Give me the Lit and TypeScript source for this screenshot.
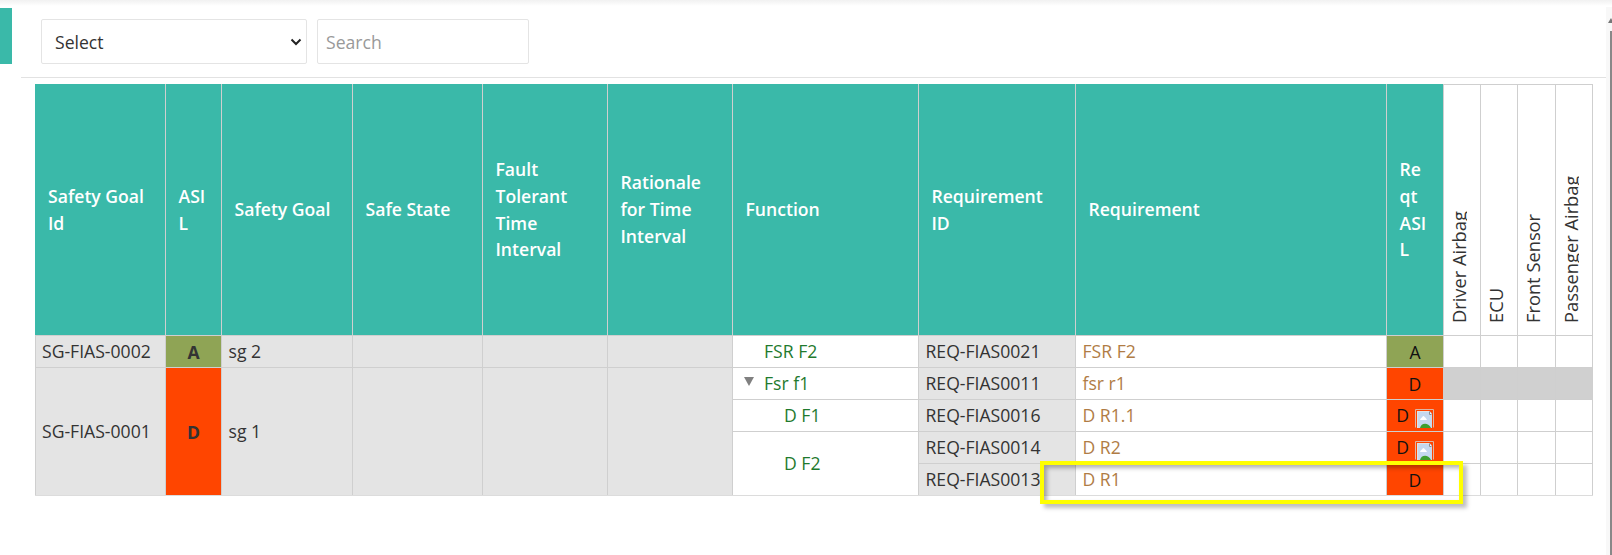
import { LitElement, html, css } from "lit";
import { customElement } from "lit/decorators.js";

const FONT = css`"Open Sans", sans-serif`;

const brokenIcon = html`<svg class="broken" width="19" height="19" viewBox="0 0 19 19" aria-hidden="true">
  <path d="M.5 18.5V.5h18v18" fill="none" stroke="#dcb6a6"/>
  <path d="M2 2h12.5L17 4.5V19H2z" fill="#c5d8ee"/>
  <path d="M2.5 19V2.5h11.5" fill="none" stroke="#e3e3e3"/>
  <path d="M14.5 2.5v3h2" fill="#fff" stroke="#8c8c8c"/>
  <path d="M5 11c.5-2 2-2 3-4 1 0 3 2 4 4z" fill="#fff"/>
  <path d="M5 19c1-5 8-6 11 0z" fill="#3f9f2d"/>
</svg>`;

@customElement("app-root")
export class AppRoot extends LitElement {
  static styles = css`
    :host { display: block; height: 555px; width: 1612px; overflow: hidden; position: relative; background: #fff; font-family: ${FONT}; color: #333; box-sizing: border-box; }
    * { box-sizing: border-box; }
    .page { display: flex; align-items: flex-start; height: 100%; }
    .tab { width: 12px; height: 56px; margin-top: 8px; background: #3ab9a9; flex: none; }
    .main { flex: none; width: 1585px; margin-left: 9px; padding-top: 19px; }
    .toolbar { display: flex; gap: 10px; padding: 0 0 13px 20px; border-bottom: 1px solid #e2e2e2; }
    .sel { width: 266px; height: 45px; border: 1px solid #e4e4e4; border-radius: 2px; display: flex; align-items: center; justify-content: space-between; padding: 0 4px 0 13px; font-size: 17.6px; color: #333; }
    .search { width: 212px; height: 45px; border: 1px solid #e4e4e4; border-radius: 2px; display: flex; align-items: center; padding-left: 8px; font-size: 17.6px; color: #999; }
    table { border-collapse: collapse; table-layout: fixed; margin: 6px 0 0 14px; width: 1557px; font-size: 17.6px; }
    th, td { border: 1px solid #cfcfcf; padding: 0 6.5px; overflow: visible; }
    thead th { height: 251px; background: #3ab9a9; color: #fff; font-weight: 600; text-align: left; padding: 0 12.5px 1px; line-height: 26.7px; vertical-align: middle; word-break: break-all; border-top-color: #3ab9a9; }
    thead th.first { border-left-color: #3ab9a9; padding-left: 12px; }
    thead th.nb { word-break: normal; }
    thead th.rot { background: #fff; color: #333; font-size: 18.3px; font-weight: 400; padding: 0 0 12px 0; vertical-align: bottom; border-top-color: #cfcfcf; }
    .rot span { display: block; writing-mode: vertical-rl; transform: rotate(180deg); line-height: 16px; width: 16px; overflow: hidden; white-space: nowrap; margin-left: 7px; }
    tbody td { height: 32px; line-height: 22px; padding-bottom: 2px; white-space: nowrap; }
    tbody td.c0 { padding-left: 6px; }
    tbody tr:last-child td, tbody td.end { border-bottom-color: #dcdcdc; }
    .g { background: #e4e4e4; }
    .a { background: #8fa455; text-align: center; padding: 0; }
    .d { background: #ff4500; text-align: center; padding: 0; }
    .b { font-weight: 700; }
    .k { color: #111; }
    .fn { color: #1f7a2e; background: #fff; }
    tbody td.i1 { padding-left: 31px; }
    tbody td.i2 { padding-left: 51px; }
    .rq { color: #b07c45; }
    .off { background: #d0d0d0; }
    .tw { position: relative; }
    .arrow { position: absolute; left: 11px; top: 9px; width: 0; height: 0; border-left: 5.5px solid transparent; border-right: 5.5px solid transparent; border-top: 9px solid #808080; }
    .broken { vertical-align: -6px; margin-left: 1px; }
    .hl { position: absolute; left: 1040px; top: 461px; width: 423px; height: 43px; border: 4px solid #ffff00; box-shadow: 4px 4px 4px rgba(0,0,0,.25), inset 3px 3px 4px rgba(0,0,0,.3); pointer-events: none; }
    .track { position: absolute; right: 0; top: 7px; bottom: 0; width: 6px; background: #f8f8f8; }
    .thumb { position: absolute; right: 0; top: 31px; bottom: 0; width: 2px; background: #888; }
    .uparrow { position: absolute; right: -2px; top: 18px; width: 0; height: 0; border-left: 3px solid transparent; border-right: 3px solid transparent; border-bottom: 5px solid #777; }
    .topline { position: absolute; left: 0; right: 0; top: 0; height: 6px; background: linear-gradient(#f1f1f1, #fff); }
  `;

  render() {
    return html`
      <div class="topline"></div>
      <div class="track"></div>
      <div class="thumb"></div>
      <div class="uparrow"></div>
      <div class="page">
        <div class="tab"></div>
        <div class="main">
          <div class="toolbar">
            <div class="sel"><span>Select</span>
              <svg width="12" height="8" viewBox="0 0 12 8"><path d="M1.5 1.5 6 6l4.5-4.5" fill="none" stroke="#222" stroke-width="2"/></svg>
            </div>
            <div class="search">Search</div>
          </div>
          <table>
            <colgroup>
              ${[130, 56, 131, 130, 125, 125, 186, 157, 311, 57, 37, 37, 38, 37].map((w) => html`<col style="width:${w}px" />`)}
            </colgroup>
            <thead>
              <tr>
                <th class="nb first">Safety Goal Id</th>
                <th>ASIL</th>
                <th class="nb">Safety Goal</th>
                <th class="nb">Safe State</th>
                <th class="nb">Fault Tolerant Time Interval</th>
                <th class="nb">Rationale for Time Interval</th>
                <th class="nb">Function</th>
                <th class="nb">Requirement ID</th>
                <th class="nb">Requirement</th>
                <th>Reqt ASIL</th>
                <th class="rot"><span>Driver Airbag</span></th>
                <th class="rot"><span>ECU</span></th>
                <th class="rot"><span>Front Sensor</span></th>
                <th class="rot"><span>Passenger Airbag</span></th>
              </tr>
            </thead>
            <tbody>
              <tr>
                <td class="g c0">SG-FIAS-0002</td>
                <td class="a b">A</td>
                <td class="g">sg 2</td>
                <td class="g"></td><td class="g"></td><td class="g"></td>
                <td class="fn i1">FSR F2</td>
                <td class="g">REQ-FIAS0021</td>
                <td class="rq">FSR F2</td>
                <td class="a k">A</td>
                <td></td><td></td><td></td><td></td>
              </tr>
              <tr>
                <td class="g end c0" rowspan="4">SG-FIAS-0001</td>
                <td class="d b end" rowspan="4">D</td>
                <td class="g end" rowspan="4">sg 1</td>
                <td class="g end" rowspan="4"></td><td class="g end" rowspan="4"></td><td class="g end" rowspan="4"></td>
                <td class="fn i1 tw"><span class="arrow"></span>Fsr f1</td>
                <td class="g">REQ-FIAS0011</td>
                <td class="rq">fsr r1</td>
                <td class="d k">D</td>
                <td class="off"></td><td class="off"></td><td class="off"></td><td class="off"></td>
              </tr>
              <tr>
                <td class="fn i2">D F1</td>
                <td class="g">REQ-FIAS0016</td>
                <td class="rq">D R1.1</td>
                <td class="d k">D ${brokenIcon}</td>
                <td></td><td></td><td></td><td></td>
              </tr>
              <tr>
                <td class="fn i2 end" rowspan="2">D F2</td>
                <td class="g">REQ-FIAS0014</td>
                <td class="rq">D R2</td>
                <td class="d k">D ${brokenIcon}</td>
                <td></td><td></td><td></td><td></td>
              </tr>
              <tr>
                <td class="g">REQ-FIAS0013</td>
                <td class="rq">D R1</td>
                <td class="d k">D</td>
                <td></td><td></td><td></td><td></td>
              </tr>
            </tbody>
          </table>
        </div>
      </div>
      <div class="hl"></div>
    `;
  }
}
